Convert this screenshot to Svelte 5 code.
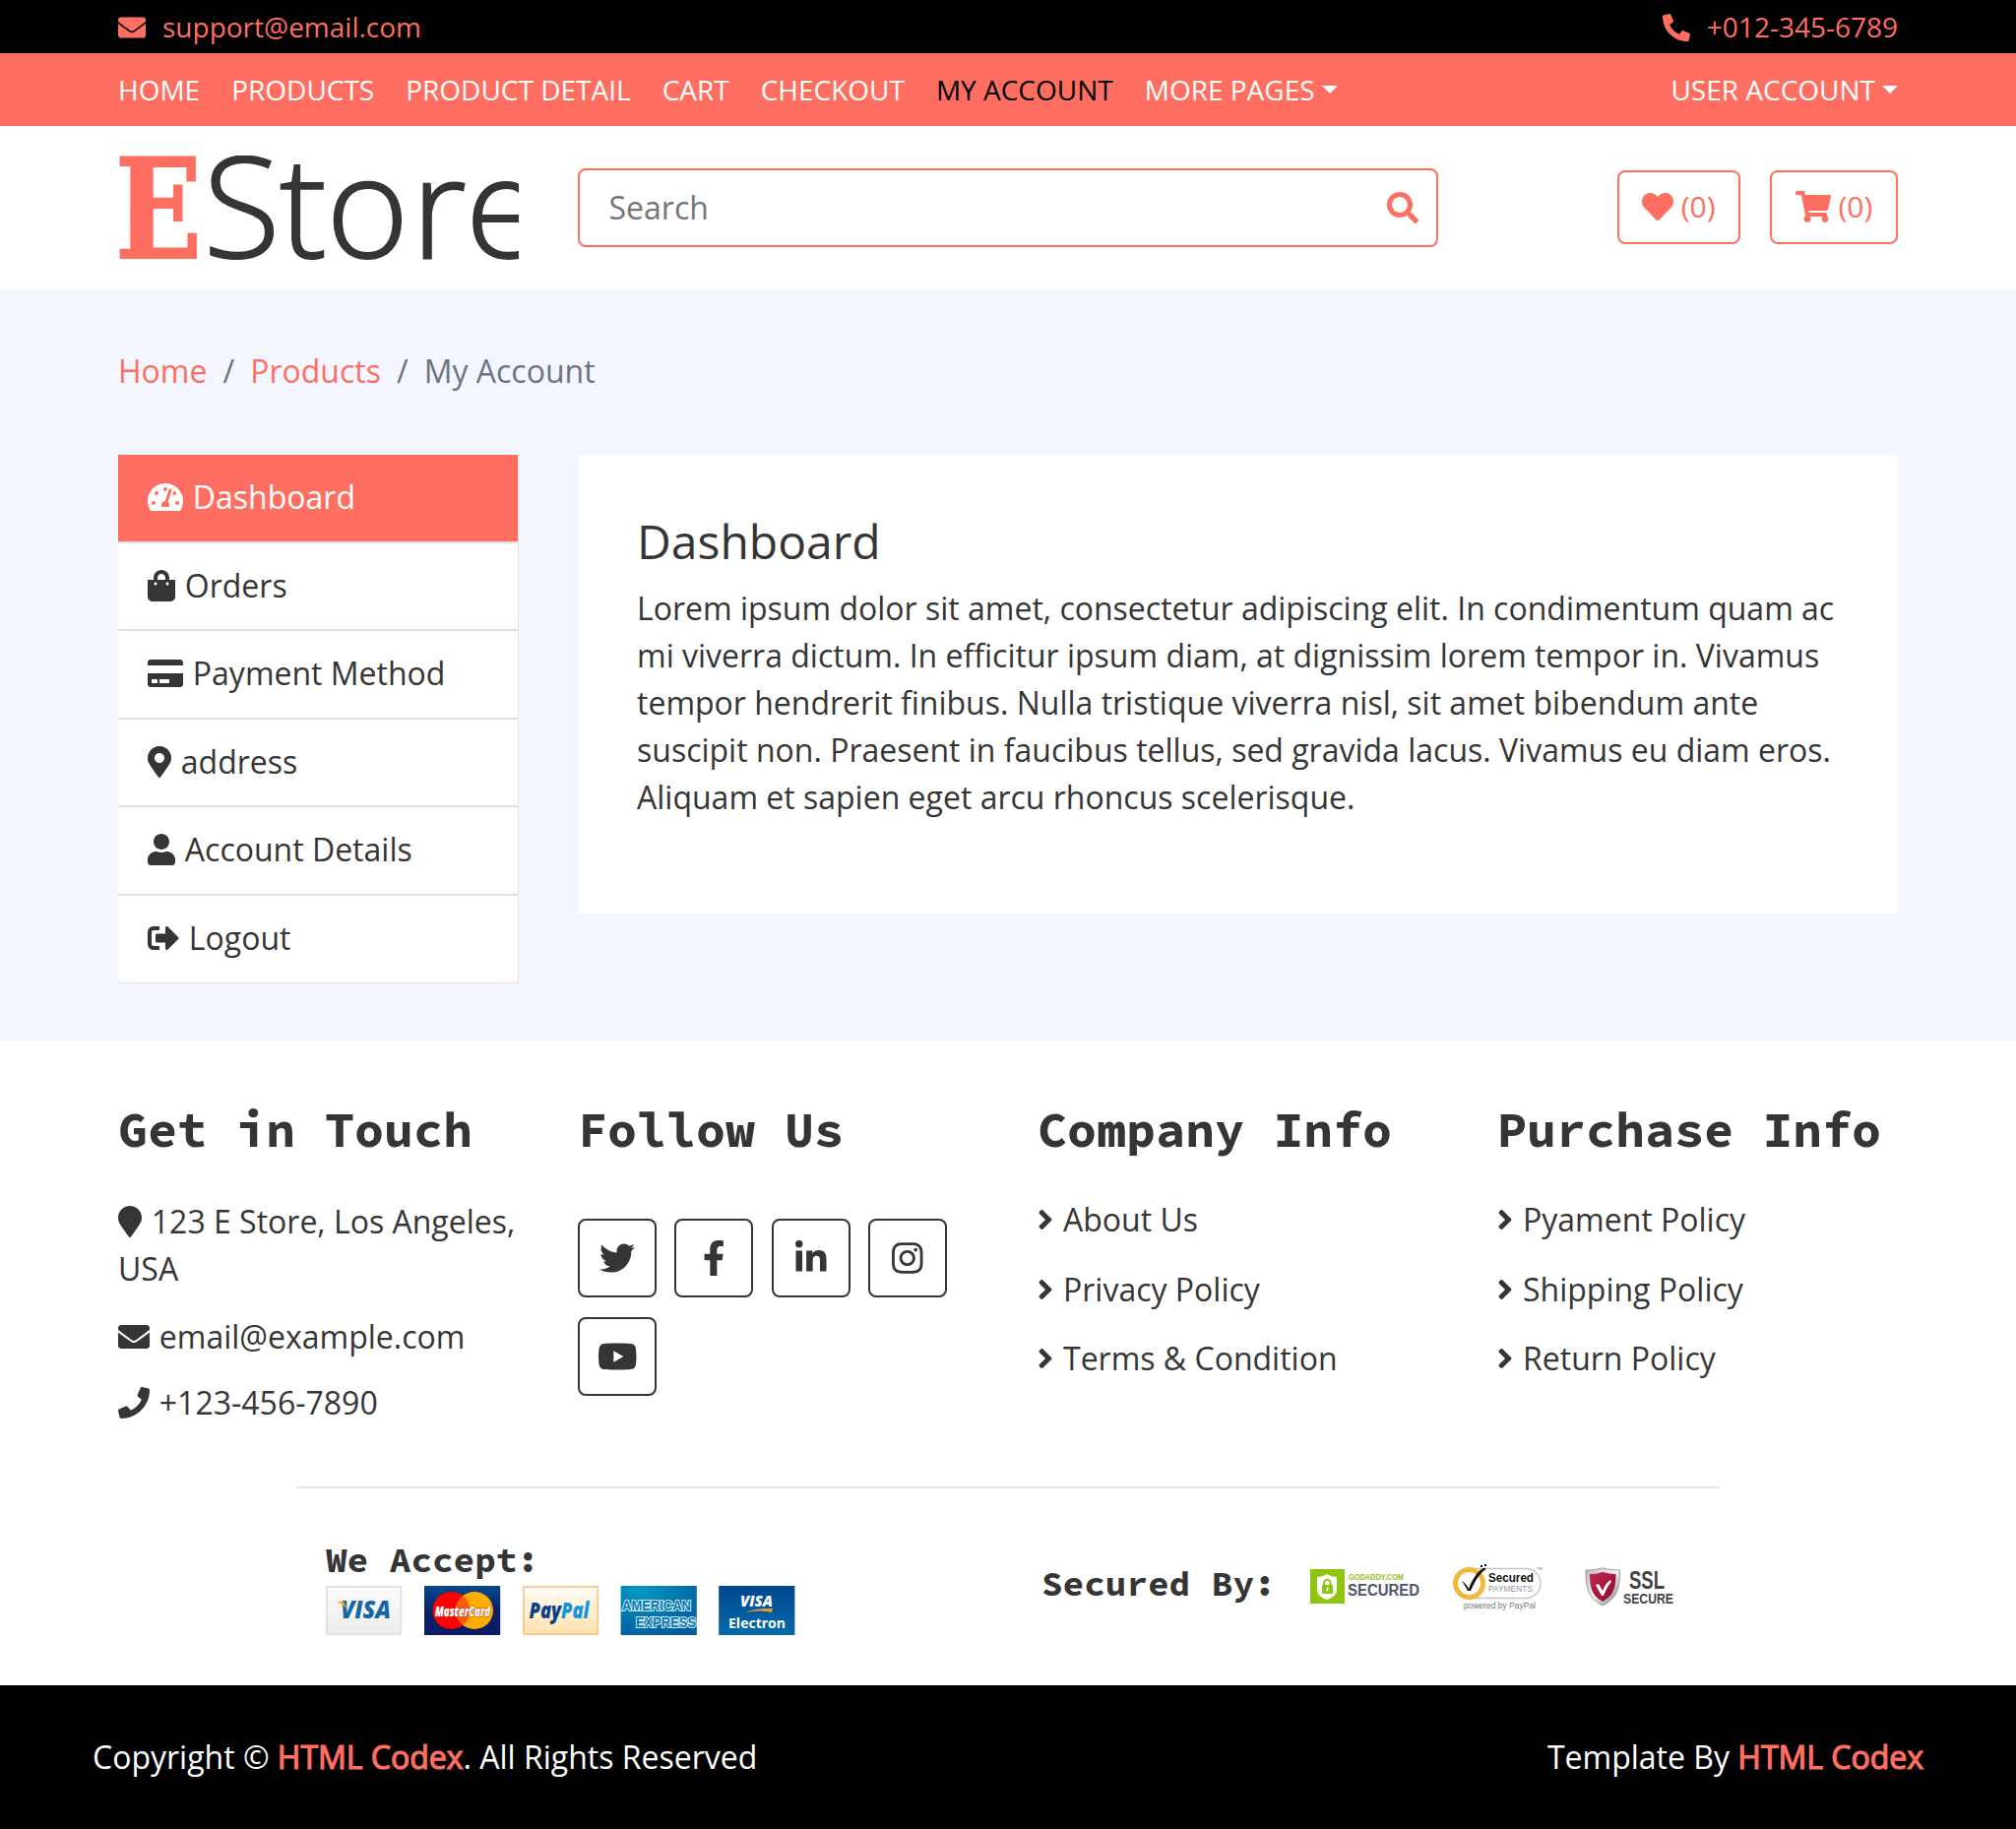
<script>
  const icons = {
    envelope: [512, 'M502.3 190.8c3.9-3.1 9.7-.2 9.7 4.7V400c0 26.5-21.5 48-48 48H48c-26.5 0-48-21.5-48-48V195.6c0-5 5.7-7.8 9.7-4.7 22.4 17.4 52.1 39.5 154.1 113.6 21.1 15.4 56.7 47.8 92.2 47.6 35.7.3 72-32.8 92.3-47.6 102-74.1 131.6-96.3 154-113.7zM256 320c23.2.4 56.6-29.2 73.4-41.4 132.7-96.3 142.8-104.7 173.4-128.7 5.8-4.5 9.2-11.5 9.2-18.9v-19c0-26.5-21.5-48-48-48H48c-26.5 0-48 21.5-48 48v19c0 7.4 3.4 14.3 9.2 18.9 30.6 23.9 40.7 32.4 173.4 128.7 16.8 12.2 50.2 41.8 73.4 41.4z'],
    phoneAlt: [512, 'M497.39 361.8l-112-48a24 24 0 0 0-28 6.9l-49.6 60.6A370.66 370.66 0 0 1 130.6 204.11l60.6-49.6a23.94 23.94 0 0 0 6.9-28l-48-112A24.16 24.16 0 0 0 122.6.61l-104 24A24 24 0 0 0 0 48c0 256.5 207.9 464 464 464a24 24 0 0 0 23.4-18.6l24-104a24.29 24.29 0 0 0-14.01-27.6z'],
    phone: [512, 'M493.4 24.6l-104-24c-11.3-2.6-22.9 3.3-27.5 13.9l-48 112c-4.2 9.8-1.4 21.3 6.9 28l60.6 49.6c-36 76.7-98.9 140.5-177.2 177.2l-49.6-60.6c-6.8-8.3-18.2-11.1-28-6.9l-112 48C3.9 366.5-2 378.1.6 389.4l24 104C27.1 504.2 36.7 512 48 512c256.1 0 464-207.5 464-464 0-11.2-7.7-20.9-18.6-23.4z'],
    search: [512, 'M505 442.7L405.3 343c-4.5-4.5-10.6-7-17-7H372c27.6-35.3 44-79.7 44-128C416 93.1 322.9 0 208 0S0 93.1 0 208s93.1 208 208 208c48.3 0 92.7-16.4 128-44v16.3c0 6.4 2.5 12.5 7 17l99.7 99.7c9.4 9.4 24.6 9.4 33.9 0l28.3-28.3c9.4-9.4 9.4-24.6.1-34zM208 336c-70.7 0-128-57.2-128-128 0-70.7 57.2-128 128-128 70.7 0 128 57.2 128 128 0 70.7-57.2 128-128 128z'],
    heart: [512, 'M462.3 62.6C407.5 15.9 326 24.3 275.7 76.2L256 96.5l-19.7-20.3C186.1 24.3 104.5 15.9 49.7 62.6c-62.8 53.6-66.1 149.8-9.9 207.9l193.5 199.8c12.5 12.9 32.8 12.9 45.3 0l193.5-199.8c56.3-58.1 53-154.3-9.8-207.9z'],
    cart: [576, 'M528.12 301.319l47.273-208C578.806 78.301 567.391 64 551.99 64H159.208l-9.166-44.81C147.758 8.021 137.93 0 126.529 0H24C10.745 0 0 10.745 0 24v16c0 13.255 10.745 24 24 24h69.883l70.248 343.435C147.325 417.1 136 435.222 136 456c0 30.928 25.072 56 56 56s56-25.072 56-56c0-15.674-6.447-29.835-16.824-40h209.647C430.447 426.165 424 440.326 424 456c0 30.928 25.072 56 56 56s56-25.072 56-56c0-22.172-12.888-41.332-31.579-50.405l5.517-24.276c3.413-15.018-8.002-29.319-23.403-29.319H218.117l-6.545-32h293.145c11.206 0 20.92-7.754 23.403-18.681z'],
    gauge: [576, 'M288 32C128.94 32 0 160.94 0 320c0 52.8 14.25 102.26 39.06 144.8 5.61 9.62 16.3 15.2 27.44 15.2h443c11.14 0 21.83-5.58 27.44-15.2C561.75 422.26 576 372.8 576 320c0-159.06-128.94-288-288-288zm0 64c14.71 0 26.58 10.13 30.32 23.65-1.11 2.26-2.64 4.23-3.45 6.67l-9.22 27.67c-5.13 3.49-10.97 6.01-17.64 6.01-17.67 0-32-14.33-32-32S270.33 96 288 96zM96 384c-17.67 0-32-14.33-32-32s14.33-32 32-32 32 14.33 32 32-14.33 32-32 32zm48-160c-17.67 0-32-14.33-32-32s14.33-32 32-32 32 14.33 32 32-14.33 32-32 32zm246.77-72.41l-61.33 184C343.13 347.33 352 364.54 352 384c0 11.72-3.38 22.55-8.88 32H232.88c-5.5-9.45-8.88-20.28-8.88-32 0-33.94 26.5-61.43 59.9-63.59l61.34-184.01c4.17-12.56 17.73-19.45 30.36-15.17 12.57 4.19 19.35 17.79 15.17 30.36zm14.66 57.2l15.52-46.55c3.47-1.29 7.13-2.23 11.05-2.23 17.67 0 32 14.33 32 32s-14.33 32-32 32c-11.38-.01-20.89-6.28-26.57-15.22zM480 384c-17.67 0-32-14.33-32-32s14.33-32 32-32 32 14.33 32 32-14.33 32-32 32z'],
    bag: [448, 'M352 160v-32C352 57.42 294.579 0 224 0 153.42 0 96 57.42 96 128v32H0v272c0 44.183 35.817 80 80 80h288c44.183 0 80-35.817 80-80V160h-96zm-192-32c0-35.29 28.71-64 64-64s64 28.71 64 64v32H160v-32zm160 120c-13.255 0-24-10.745-24-24s10.745-24 24-24 24 10.745 24 24-10.745 24-24 24zm-192 0c-13.255 0-24-10.745-24-24s10.745-24 24-24 24 10.745 24 24-10.745 24-24 24z'],
    card: [576, 'M0 432c0 26.5 21.5 48 48 48h480c26.5 0 48-21.5 48-48V256H0v176zm192-68c0-6.6 5.4-12 12-12h136c6.6 0 12 5.4 12 12v40c0 6.6-5.4 12-12 12H204c-6.6 0-12-5.4-12-12v-40zm-128 0c0-6.6 5.4-12 12-12h72c6.6 0 12 5.4 12 12v40c0 6.6-5.4 12-12 12H76c-6.6 0-12-5.4-12-12v-40zM576 80v48H0V80c0-26.5 21.5-48 48-48h480c26.5 0 48 21.5 48 48z'],
    markerAlt: [384, 'M172.268 501.67C26.97 291.031 0 269.413 0 192 0 85.961 85.961 0 192 0s192 85.961 192 192c0 77.413-26.97 99.031-172.268 309.67-9.535 13.774-29.93 13.773-39.464 0zM192 272c44.183 0 80-35.817 80-80s-35.817-80-80-80-80 35.817-80 80 35.817 80 80 80z'],
    marker: [384, 'M172.268 501.67C26.97 291.031 0 269.413 0 192 0 85.961 85.961 0 192 0s192 85.961 192 192c0 77.413-26.97 99.031-172.268 309.67-9.535 13.774-29.93 13.773-39.464 0z'],
    user: [448, 'M224 256c70.7 0 128-57.3 128-128S294.7 0 224 0 96 57.3 96 128s57.3 128 128 128zm89.6 32h-16.7c-22.2 10.2-46.9 16-72.9 16s-50.6-5.8-72.9-16h-16.7C60.2 288 0 348.2 0 422.4V464c0 26.5 21.5 48 48 48h352c26.5 0 48-21.5 48-48v-41.6c0-74.2-60.2-134.4-134.4-134.4z'],
    signOut: [512, 'M497 273L329 441c-15 15-41 4.5-41-17v-96H152c-13.3 0-24-10.7-24-24v-96c0-13.3 10.7-24 24-24h136V88c0-21.4 25.9-32 41-17l168 168c9.3 9.4 9.3 24.6 0 34zM192 436v-40c0-6.6-5.4-12-12-12H96c-17.7 0-32-14.3-32-32V160c0-17.7 14.3-32 32-32h84c6.6 0 12-5.4 12-12V76c0-6.6-5.4-12-12-12H96c-53 0-96 43-96 96v192c0 53 43 96 96 96h84c6.6 0 12-5.4 12-12z'],
    twitter: [512, 'M459.37 151.716c.325 4.548.325 9.097.325 13.645 0 138.72-105.583 298.558-298.558 298.558-59.452 0-114.68-17.219-161.137-47.106 8.447.974 16.568 1.299 25.34 1.299 49.055 0 94.213-16.568 130.274-44.832-46.132-.975-84.792-31.188-98.112-72.772 6.498.974 12.995 1.624 19.818 1.624 9.421 0 18.843-1.3 27.614-3.573-48.081-9.747-84.143-51.98-84.143-102.985v-1.299c13.969 7.797 30.214 12.67 47.431 13.319-28.264-18.843-46.781-51.005-46.781-87.391 0-19.492 5.197-37.36 14.294-52.954 51.655 63.675 129.3 105.258 216.365 109.807-1.624-7.797-2.599-15.918-2.599-24.04 0-57.828 46.782-104.934 104.934-104.934 30.213 0 57.502 12.67 76.67 33.137 23.715-4.548 46.456-13.32 66.599-25.34-7.798 24.366-24.366 44.833-46.132 57.827 21.117-2.273 41.584-8.122 60.426-16.243-14.292 20.791-32.161 39.308-52.628 54.253z'],
    facebook: [320, 'M279.14 288l14.22-92.66h-88.91v-60.13c0-25.35 12.42-50.06 52.24-50.06h40.42V6.26S260.43 0 225.36 0c-73.22 0-121.08 44.38-121.08 124.72v70.62H22.89V288h81.39v224h100.17V288z'],
    linkedin: [448, 'M100.28 448H7.4V148.9h92.88zM53.79 108.1C24.09 108.1 0 83.5 0 53.8a53.79 53.79 0 0 1 107.58 0c0 29.7-24.1 54.3-53.79 54.3zM447.9 448h-92.68V302.4c0-34.7-.7-79.2-48.29-79.2-48.29 0-55.69 37.7-55.69 76.7V448h-92.78V148.9h89.08v40.8h1.3c12.4-23.5 42.69-48.3 87.88-48.3 94 0 111.28 61.9 111.28 142.3V448z'],
    instagram: [448, 'M224.1 141c-63.6 0-114.9 51.3-114.9 114.9s51.3 114.9 114.9 114.9S339 319.5 339 255.9 287.7 141 224.1 141zm0 189.6c-41.1 0-74.7-33.5-74.7-74.7s33.5-74.7 74.7-74.7 74.7 33.5 74.7 74.7-33.6 74.7-74.7 74.7zm146.4-194.3c0 14.9-12 26.8-26.8 26.8-14.9 0-26.8-12-26.8-26.8s12-26.8 26.8-26.8 26.8 12 26.8 26.8zm76.1 27.2c-1.7-35.9-9.9-67.7-36.2-93.9-26.2-26.2-58-34.4-93.9-36.2-37-2.1-147.9-2.1-184.9 0-35.8 1.7-67.6 9.9-93.9 36.1s-34.4 58-36.2 93.9c-2.1 37-2.1 147.9 0 184.9 1.7 35.9 9.9 67.7 36.2 93.9s58 34.4 93.9 36.2c37 2.1 147.9 2.1 184.9 0 35.9-1.7 67.7-9.9 93.9-36.2 26.2-26.2 34.4-58 36.2-93.9 2.1-37 2.1-147.8 0-184.8zM398.8 388c-7.8 19.6-22.9 34.7-42.6 42.6-29.5 11.7-99.5 9-132.1 9s-102.7 2.6-132.1-9c-19.6-7.8-34.7-22.9-42.6-42.6-11.7-29.5-9-99.5-9-132.1s-2.6-102.7 9-132.1c7.8-19.6 22.9-34.7 42.6-42.6 29.5-11.7 99.5-9 132.1-9s102.7-2.6 132.1 9c19.6 7.8 34.7 22.9 42.6 42.6 11.7 29.5 9 99.5 9 132.1s2.7 102.7-9 132.1z'],
    youtube: [576, 'M549.655 124.083c-6.281-23.65-24.787-42.276-48.284-48.597C458.781 64 288 64 288 64S117.22 64 74.629 75.486c-23.497 6.322-42.003 24.947-48.284 48.597-11.412 42.867-11.412 132.305-11.412 132.305s0 89.438 11.412 132.305c6.281 23.65 24.787 41.5 48.284 47.821C117.22 448 288 448 288 448s170.78 0 213.371-11.486c23.497-6.321 42.003-24.171 48.284-47.821 11.412-42.867 11.412-132.305 11.412-132.305s0-89.438-11.412-132.305zm-317.51 213.508V175.185l142.739 81.205-142.739 81.201z'],
    angle: [256, 'M224.3 273l-136 136c-9.4 9.4-24.6 9.4-33.9 0l-22.6-22.6c-9.4-9.4-9.4-24.6 0-33.9l96.4-96.4-96.4-96.4c-9.4-9.4-9.4-24.6 0-33.9L54.3 103c9.4-9.4 24.6-9.4 33.9 0l136 136c9.5 9.4 9.5 24.6.1 34z']
  };

  const nav = ['Home', 'Products', 'Product Detail', 'Cart', 'Checkout', 'My Account'];
  const menu = [
    ['gauge', 'Dashboard'],
    ['bag', 'Orders'],
    ['card', 'Payment Method'],
    ['markerAlt', 'address'],
    ['user', 'Account Details'],
    ['signOut', 'Logout']
  ];
  const social = ['twitter', 'facebook', 'linkedin', 'instagram', 'youtube'];
  const linkGroups = [
    ['Company Info', ['About Us', 'Privacy Policy', 'Terms & Condition']],
    ['Purchase Info', ['Pyament Policy', 'Shipping Policy', 'Return Policy']]
  ];
</script>

{#snippet icon(name)}
  <svg class="icon" viewBox="0 0 {icons[name][0]} 512" style:width="{icons[name][0] / 512}em"><path d={icons[name][1]} /></svg>
{/snippet}

<div class="page">
  <div class="topbar">
    <span>{@render icon('envelope')}<a href="#mail">support@email.com</a></span>
    <span>{@render icon('phoneAlt')}<a href="#tel">+012-345-6789</a></span>
  </div>

  <nav class="nav">
    {#each nav as item}
      <a href="#nav" class:active={item === 'My Account'}>{item}</a>
    {/each}
    <a href="#more" class="drop">More Pages</a>
    <a href="#user" class="drop user">User Account</a>
  </nav>

  <header class="header">
    <svg class="logo" viewBox="0 0 407 106">
      <text class="logo-e" x="-3" y="103.5" textLength="88" lengthAdjust="spacingAndGlyphs">E</text>
      <text class="logo-rest" x="86.5 164 211.5 298 353" y="104">Store</text>
    </svg>
    <div class="search">
      <span>Search</span>
      {@render icon('search')}
    </div>
    <div class="actions">
      <a class="btn" href="#wish">{@render icon('heart')}<span>(0)</span></a>
      <a class="btn" href="#cart">{@render icon('cart')}<span>(0)</span></a>
    </div>
  </header>

  <main class="main">
    <div class="crumbs">
      <a href="#home">Home</a><i>/</i><a href="#products">Products</a><i>/</i><span>My Account</span>
    </div>
    <div class="account">
      <div class="menu">
        {#each menu as [name, label], i}
          <a href="#tab" class:on={i === 0}>{@render icon(name)} {label}</a>
        {/each}
      </div>
      <section class="panel">
        <h4>Dashboard</h4>
        <p>
          Lorem ipsum dolor sit amet, consectetur adipiscing elit. In condimentum quam ac mi viverra dictum. In
          efficitur ipsum diam, at dignissim lorem tempor in. Vivamus tempor hendrerit finibus. Nulla tristique viverra
          nisl, sit amet bibendum ante suscipit non. Praesent in faucibus tellus, sed gravida lacus. Vivamus eu diam
          eros. Aliquam et sapien eget arcu rhoncus scelerisque.
        </p>
      </section>
    </div>
  </main>

  <footer class="footer">
    <div class="cols">
      <div class="contact">
        <h2>Get in Touch</h2>
        <p>{@render icon('marker')} 123 E Store, Los Angeles, USA</p>
        <p>{@render icon('envelope')} email@example.com</p>
        <p>{@render icon('phone')} +123-456-7890</p>
      </div>
      <div>
        <h2>Follow Us</h2>
        <div class="social">
          {#each social as s}
            <a href="#social" aria-label={s}>{@render icon(s)}</a>
          {/each}
        </div>
      </div>
      {#each linkGroups as [title, links]}
        <div class="links">
          <h2>{title}</h2>
          {#each links as l}
            <a href="#info">{@render icon('angle')}{l}</a>
          {/each}
        </div>
      {/each}
    </div>

    <div class="payment">
      <div class="accept">
        <h3>We Accept:</h3>
        <svg class="cards" viewBox="0 0 478 50">
          <defs>
            <linearGradient id="gv" x2="0" y2="1"><stop stop-color="#fcfcfc" /><stop offset="1" stop-color="#ececec" /></linearGradient>
            <linearGradient id="gm" x2="0" y2="1"><stop stop-color="#06498a" /><stop offset=".5" stop-color="#0a2169" /><stop offset="1" stop-color="#0a1b68" /></linearGradient>
            <linearGradient id="gp" x2="0" y2="1"><stop stop-color="#fffdf8" /><stop offset="1" stop-color="#ffe2ae" /></linearGradient>
            <radialGradient id="ga" cx=".25" cy=".1" r="1"><stop stop-color="#0698c6" /><stop offset="1" stop-color="#025a9c" /></radialGradient>
            <linearGradient id="ge" x2="0" y2="1"><stop stop-color="#024790" /><stop offset="1" stop-color="#046aaa" /></linearGradient>
          </defs>
          <rect x=".9" y=".9" width="75.4" height="48.4" fill="url(#gv)" stroke="#e0e0e0" stroke-width="1.8" />
          <text class="brand" x="15" y="33" font-size="24" textLength="51" lengthAdjust="spacingAndGlyphs" fill="#1467a3">VISA</text>
          <path d="M11 16h7l4 9c-2-4-6-7-11-9z" fill="#f6a91d" />

          <rect x="100" width="77.2" height="50" fill="url(#gm)" />
          <circle cx="127.5" cy="25" r="19" fill="#fe0100" />
          <circle cx="151" cy="25" r="19" fill="#ffab00" />
          <path d="M139.2 10a19 19 0 0 0 0 30a19 19 0 0 0 0-30z" fill="#fb5a0a" />
          <text class="brand" x="111" y="30.5" font-size="14" textLength="56" lengthAdjust="spacingAndGlyphs" fill="#fff" stroke="#b9453a" stroke-width="1.2" paint-order="stroke">MasterCard</text>

          <rect x="200.9" y=".9" width="75.4" height="48.4" fill="url(#gp)" stroke="#ffc488" stroke-width="1.8" />
          <text class="brand" x="206.5" y="33" font-size="22" textLength="61" lengthAdjust="spacingAndGlyphs" fill="#0b3f88">Pay<tspan fill="#1396d6">Pal</tspan></text>

          <rect x="299.6" width="77.2" height="50" fill="url(#ga)" />
          <text class="amex" x="301" y="24.5" font-size="14" textLength="70" lengthAdjust="spacingAndGlyphs">AMERICAN</text>
          <text class="amex" x="315" y="41.5" font-size="14" textLength="61" lengthAdjust="spacingAndGlyphs">EXPRESS</text>

          <rect x="399.2" width="77.2" height="50" fill="url(#ge)" />
          <text class="brand" x="421" y="21" font-size="16" textLength="33" lengthAdjust="spacingAndGlyphs" fill="#fff">VISA</text>
          <path d="M426 27c7-3 14-4 28-4l-1 4c-10-2-17-2-27 0z" fill="#e99a26" />
          <text x="409" y="42.5" font-size="14.5" textLength="58" lengthAdjust="spacingAndGlyphs" fill="#fff" class="electron">Electron</text>
        </svg>
      </div>
      <div class="secured">
        <h3>Secured By:</h3>
        <svg class="seals" viewBox="0 0 376 50">
          <defs>
            <linearGradient id="gs" x2="1" y2="1"><stop stop-color="#c3264c" /><stop offset="1" stop-color="#8e0d33" /></linearGradient>
            <linearGradient id="gr" x2="1" y2="1"><stop stop-color="#b9b9b9" /><stop offset=".5" stop-color="#f3f3f3" /><stop offset="1" stop-color="#777" /></linearGradient>
          </defs>
          <rect x="1" y="9" width="35" height="35" fill="#8fc412" />
          <path d="M8 17c4 0 7-1 10-3 3 2 6 3 10 3v13c0 5-4 8-10 10-6-2-10-5-10-10z" fill="#fff" />
          <rect x="13" y="25" width="11" height="9" rx="1" fill="#8fc412" />
          <path d="M15 25v-2a3.3 3.3 0 0 1 6.6 0v2" fill="none" stroke="#8fc412" stroke-width="2" />
          <path d="M18.5 27.5v4" stroke="#fff" stroke-width="1.6" />
          <text class="arial b" x="40" y="20" font-size="8.5" textLength="56" lengthAdjust="spacingAndGlyphs" fill="#8fc412">GODADDY.COM</text>
          <text class="arial b" x="39" y="35.5" font-size="16" textLength="73" lengthAdjust="spacingAndGlyphs" fill="#4b5568">SECURED</text>

          <rect x="156" y="8.5" width="79" height="30" rx="15" fill="#fff" stroke="#c4c4c4" stroke-width="1.4" />
          <circle cx="162.5" cy="23.5" r="14" fill="#fff" stroke="#f0b93d" stroke-width="5" />
          <path d="M155 21c3 2 5 4 7 8 3-8 7-15 13-20l3 1c-6 5-10 12-14 21h-3c-2-4-4-7-6-10z" fill="#111" />
          <path d="M174 5h2v2h-2zM178 4h2v2h-2zM176 8h3v2h-3z" fill="#111" />
          <text class="arial b" x="182" y="22" font-size="12.5" textLength="46" lengthAdjust="spacingAndGlyphs" fill="#111">Secured</text>
          <text class="arial" x="182" y="32" font-size="9" textLength="45" lengthAdjust="spacingAndGlyphs" fill="#999">PAYMENTS</text>
          <text class="arial" x="157" y="49" font-size="8.5" textLength="73" lengthAdjust="spacingAndGlyphs" fill="#777">powered by PayPal</text>
          <text class="arial" x="231" y="10" font-size="4" fill="#777">TM</text>

          <path d="M281 10c8 0 12-1 17.5-2 5 1 10 2 17 2 0 16-1 28-17.5 36-16-8-17-20-17-36z" fill="url(#gr)" stroke="#8b8b8b" stroke-width=".8" />
          <path d="M285 14c6 0 9-1 13.5-2 4 1 8 2 13 2 0 13-2 22-13.500 28-11-6-13-15-13-28z" fill="url(#gs)" />
          <path d="M291 25l3-1 4 7c2-5 4-8 8-11l1 2c-4 4-6 9-8 14h-2z" fill="#fff" />
          <text class="arial b" x="325" y="29" font-size="25" textLength="36" lengthAdjust="spacingAndGlyphs" fill="#444">SSL</text>
          <text class="arial b" x="319" y="43.5" font-size="15.5" textLength="51" lengthAdjust="spacingAndGlyphs" fill="#444">SECURE</text>
        </svg>
      </div>
    </div>
  </footer>

  <div class="bottom">
    <p>Copyright © <a href="#codex">HTML Codex</a>. All Rights Reserved</p>
    <p>Template By <a href="#codex">HTML Codex</a></p>
  </div>
</div>

<style>
  :global(body) {
    margin: 0;
    background: #fff;
  }
  .page {
    width: 2048px;
    font: 32px/48px 'Open Sans', sans-serif;
    color: #353535;
  }
  .page :global(*) {
    box-sizing: border-box;
  }
  a {
    color: inherit;
    text-decoration: none;
  }
  h2,
  h3,
  h4,
  p {
    margin: 0;
  }
  .icon {
    height: 1em;
    vertical-align: -0.125em;
    fill: currentColor;
    overflow: visible;
  }

  .topbar {
    height: 54px;
    padding: 0 120px;
    display: flex;
    justify-content: space-between;
    align-items: center;
    background: #000;
    color: #ff6f61;
    font-size: 28px;
  }
  .topbar a {
    margin-left: 17px;
  }

  .nav {
    height: 74px;
    padding: 0 120px;
    display: flex;
    align-items: center;
    gap: 32px;
    background: #ff6f61;
    color: #fff;
    font-size: 28px;
    text-transform: uppercase;
  }
  .nav .active {
    color: #000;
  }
  .drop::after {
    content: '';
    display: inline-block;
    margin-left: 7px;
    vertical-align: 7px;
    border: 8.4px solid transparent;
    border-top-color: #fff;
    border-bottom: 0;
  }
  .user {
    margin-left: auto;
  }

  .header {
    height: 166px;
    padding: 0 120px;
    display: grid;
    grid-template-columns: 407px 874px 1fr;
    column-gap: 60px;
    align-items: center;
  }
  .logo {
    width: 407px;
    height: 106px;
    overflow: hidden;
  }
  .logo-e {
    font: bold 140px 'DejaVu Serif', serif;
    fill: #ff6f61;
    stroke: #ff6f61;
    stroke-width: 2;
  }
  .logo-rest {
    font: 300 143px 'Open Sans', sans-serif;
    fill: #353535;
    stroke: #353535;
    stroke-width: 2;
  }
  .search {
    height: 80px;
    border: 2px solid #ff6f61;
    border-radius: 8px;
    padding: 0 18px 0 29.5px;
    display: flex;
    justify-content: space-between;
    align-items: center;
    color: #757575;
  }
  .search .icon {
    color: #ff6f61;
  }
  .actions {
    display: flex;
    justify-content: flex-end;
    gap: 30px;
    margin-bottom: 2px;
  }
  .btn {
    height: 75px;
    padding: 0 23.7px;
    border: 2px solid #ff6f61;
    border-radius: 8px;
    display: flex;
    align-items: center;
    gap: 7.5px;
    color: #ff6f61;
  }
  .btn span {
    font-size: 30px;
  }

  .main {
    height: 763px;
    padding: 59px 120px 0;
    background: #f3f6ff;
  }
  .crumbs {
    color: #6c757d;
    margin-bottom: 61px;
  }
  .crumbs a {
    color: #ff6f61;
  }
  .crumbs i {
    font-style: normal;
    margin: 0 16px;
  }
  .account {
    display: grid;
    grid-template-columns: 407px 1fr;
    column-gap: 60px;
    align-items: start;
  }
  .menu {
    background: #fff;
    border-right: 1px solid #f6dcdc;
  }
  .menu .icon,
  .contact .icon {
    margin-right: 1.5px;
  }
  .menu a {
    display: block;
    height: 89.5px;
    padding: 19px 30px;
    border-bottom: 2px solid #e2dfdf;
  }
  .menu a:last-child {
    border-bottom: 1px solid #f6dcdc;
  }
  .menu .on {
    background: #ff6f61;
    color: #fff;
  }
  .panel {
    height: 466px;
    padding: 59px 60px 0;
    background: #fff;
  }
  .panel h4 {
    font-size: 48px;
    line-height: 58px;
    font-weight: 400;
    margin-bottom: 15px;
  }

  .footer {
    height: 655px;
    padding: 61px 120px 0;
  }
  .cols {
    height: 392px;
    display: grid;
    grid-template-columns: repeat(4, 407px);
    column-gap: 60px;
  }
  h2,
  h3 {
    font-family: 'Source Code Pro', 'Noto Sans Mono CJK SC', 'DejaVu Sans Mono', monospace;
    font-weight: 700;
    white-space: nowrap;
  }
  h2 {
    font-size: 50px;
    line-height: 60px;
    margin-bottom: 37px;
  }
  .contact h2 {
    margin-bottom: 39px;
  }
  .contact p {
    margin-bottom: 19.5px;
  }
  .contact h2 + p {
    margin-bottom: 20.5px;
  }
  .social {
    margin-top: 60px;
    display: flex;
    flex-wrap: wrap;
    gap: 19.5px 18.4px;
  }
  .social a {
    width: 80px;
    height: 80px;
    border: 2px solid #353535;
    border-radius: 8px;
    display: flex;
    align-items: center;
    justify-content: center;
    font-size: 36px;
  }
  .links a {
    display: flex;
    align-items: center;
    height: 48px;
    margin-bottom: 22.5px;
  }
  .links .icon {
    margin-right: 10px;
  }

  .payment {
    width: 1446px;
    margin: 0 auto;
    padding: 55px 30px 0;
    border-top: 2px solid #e6e6e6;
    display: grid;
    grid-template-columns: 727px 1fr;
    align-items: start;
  }
  h3 {
    font-size: 36px;
    line-height: 36px;
  }
  .accept h3 {
    margin-bottom: 8px;
  }
  .cards {
    display: block;
    width: 478px;
    height: 50px;
  }
  .brand {
    font-family: 'Open Sans', sans-serif;
    font-weight: 800;
    font-style: italic;
  }
  .electron {
    font-family: 'Open Sans', sans-serif;
    font-weight: 700;
  }
  .amex {
    font-family: 'Liberation Sans', sans-serif;
    font-weight: 700;
    fill: #0676b0;
    stroke: #d9f0fa;
    stroke-width: 2;
    paint-order: stroke;
  }
  .arial {
    font-family: 'Liberation Sans', sans-serif;
  }
  .b {
    font-weight: 700;
  }
  .secured {
    height: 86px;
    display: flex;
    align-items: center;
    gap: 34px;
  }
  .secured h3 {
    margin-bottom: 2px;
  }
  .seals {
    width: 376px;
    height: 50px;
    flex: none;
    overflow: visible;
  }

  .bottom {
    height: 146px;
    padding: 0 94px;
    display: flex;
    justify-content: space-between;
    align-items: center;
    background: #000;
    color: #fff;
  }
  .bottom a {
    color: #ff6f61;
    -webkit-text-stroke: 1.2px #ff6f61;
  }
</style>
